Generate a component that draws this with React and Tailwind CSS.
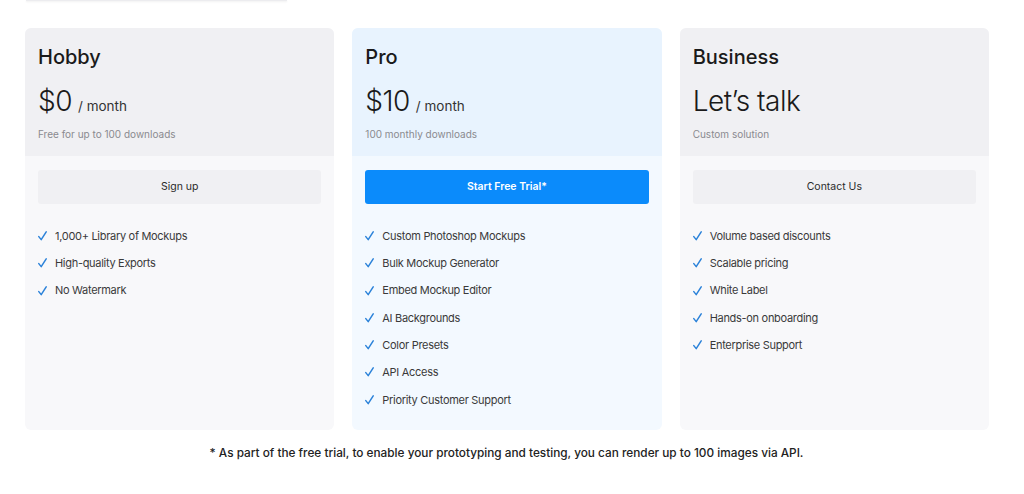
import React from "react";

const plans = [
  {
    name: "Hobby",
    price: "$0",
    per: "/ month",
    note: "Free for up to 100 downloads",
    button: "Sign up",
    pro: false,
    features: ["1,000+ Library of Mockups", "High-quality Exports", "No Watermark"],
  },
  {
    name: "Pro",
    price: "$10",
    per: "/ month",
    note: "100 monthly downloads",
    button: "Start Free Trial*",
    pro: true,
    features: [
      "Custom Photoshop Mockups",
      "Bulk Mockup Generator",
      "Embed Mockup Editor",
      "AI Backgrounds",
      "Color Presets",
      "API Access",
      "Priority Customer Support",
    ],
  },
  {
    name: "Business",
    price: "Let’s talk",
    per: "",
    note: "Custom solution",
    button: "Contact Us",
    pro: false,
    features: [
      "Volume based discounts",
      "Scalable pricing",
      "White Label",
      "Hands-on onboarding",
      "Enterprise Support",
    ],
  },
];

function Check() {
  return (
    <svg width="9" height="10" viewBox="0 0 9 10" className="mr-[8px] shrink-0">
      <path
        d="M0.8 5.6 L3.2 8.6 L8.2 0.8"
        fill="none"
        stroke="#2b82d9"
        strokeWidth="1.5"
        strokeLinecap="round"
        strokeLinejoin="round"
      />
    </svg>
  );
}

function Card({ p }) {
  return (
    <div
      className={`flex flex-col rounded-[6px] overflow-hidden ${
        p.pro ? "bg-[#f3f9ff]" : "bg-[#f8f8fa]"
      }`}
    >
      <div
        className={`h-[128px] px-[13px] pt-[15px] ${
          p.pro ? "bg-[#e8f3fe]" : "bg-[#f0f0f3]"
        }`}
      >
        <div className="text-[20px] leading-[28px] font-medium text-[#1a1a1a]">{p.name}</div>
        <div className="mt-[14px] flex items-baseline gap-[6px] h-[32px]">
          <span className="text-[28px] leading-[32px] font-light text-[#1a1a1a] tracking-[-0.5px]">
            {p.price}
          </span>
          {p.per && <span className="text-[13.5px] text-[#333]">{p.per}</span>}
        </div>
        <div className="mt-[10px] text-[10px] leading-[14px] text-[#8a8a8f]">{p.note}</div>
      </div>
      <div className="px-[13px] pt-[14px] pb-[21px]">
        <div
          className={`h-[34px] rounded-[3px] flex items-center justify-center text-[10.5px] ${
            p.pro
              ? "bg-[#0b8bfb] text-white font-semibold"
              : "bg-[#f0f0f3] text-[#2a2a2a]"
          }`}
        >
          {p.button}
        </div>
        <ul className="mt-[23px] flex flex-col gap-[9.3px]">
          {p.features.map((f) => (
            <li
              key={f}
              className="flex items-center h-[18px] text-[11px] tracking-[-0.3px] text-[#3a3a3a]"
            >
              <Check />
              <span>{f}</span>
            </li>
          ))}
        </ul>
      </div>
    </div>
  );
}

export default function App() {
  return (
    <div
      className="w-[1024px] h-[494px] bg-white overflow-hidden"
      style={{ fontFamily: "Inter, 'Noto Sans', sans-serif" }}
    >
      <div className="ml-[26px] w-[261px] h-[1px] bg-[#ececef] shadow-[0_1px_2px_rgba(0,0,0,0.08)]" />
      <div className="ml-[25px] mt-[27px] w-[964px] grid grid-cols-3 gap-[18px] items-stretch">
        {plans.map((p) => (
          <Card key={p.name} p={p} />
        ))}
      </div>
      <div className="mt-[15px] text-center text-[11.8px] font-medium text-[#222] pr-[11px]">
        * As part of the free trial, to enable your prototyping and testing, you can render up to 100 images via API.
      </div>
    </div>
  );
}
